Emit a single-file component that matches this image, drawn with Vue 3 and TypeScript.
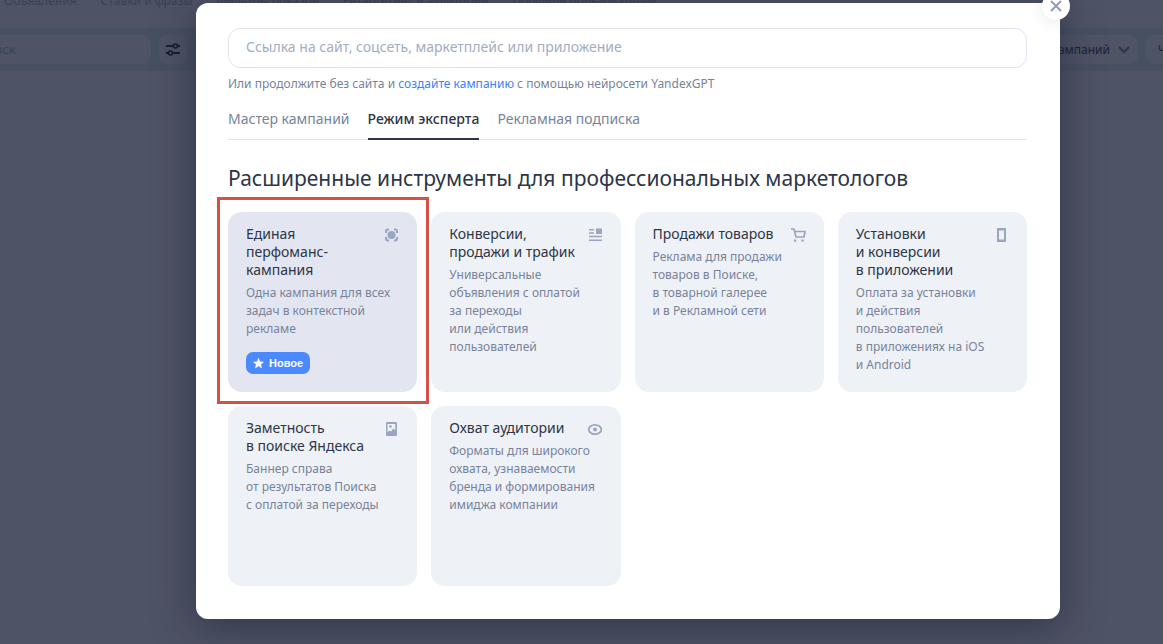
<script setup lang="ts">
import { ref } from 'vue'

interface Tool {
  icon: 'focus' | 'layout' | 'cart' | 'phone' | 'banner' | 'eye'
  title: string[]
  text: string[]
  isNew?: boolean
}

const sections = ['Объявления', 'Ставки и фразы', 'Фильтры показов', 'Ретаргетинг и аудитории', 'Профили пользователей']
const tabs = ['Мастер кампаний', 'Режим эксперта', 'Рекламная подписка']
const activeTab = ref(tabs[1])
const site = ref('')
const search = ref('')

const tools: Tool[] = [
  {
    icon: 'focus',
    title: ['Единая', 'перфоманс-', 'кампания'],
    text: ['Одна кампания для всех', 'задач в контекстной', 'рекламе'],
    isNew: true,
  },
  {
    icon: 'layout',
    title: ['Конверсии,', 'продажи и трафик'],
    text: ['Универсальные', 'объявления с оплатой', 'за переходы', 'или действия', 'пользователей'],
  },
  {
    icon: 'cart',
    title: ['Продажи товаров'],
    text: ['Реклама для продажи', 'товаров в Поиске,', 'в товарной галерее', 'и в Рекламной сети'],
  },
  {
    icon: 'phone',
    title: ['Установки', 'и конверсии', 'в приложении'],
    text: ['Оплата за установки', 'и действия', 'пользователей', 'в приложениях на iOS', 'и Android'],
  },
  {
    icon: 'banner',
    title: ['Заметность', 'в поиске Яндекса'],
    text: ['Баннер справа', 'от результатов Поиска', 'с оплатой за переходы'],
  },
  {
    icon: 'eye',
    title: ['Охват аудитории'],
    text: ['Форматы для широкого', 'охвата, узнаваемости', 'бренда и формирования', 'имиджа компании'],
  },
]
</script>

<template>
  <div class="screen">
    <div class="page">
      <nav class="sections">
        <a v-for="s in sections" :key="s" href="#">{{ s }}</a>
      </nav>
      <div class="toolbar">
        <div class="search-wrap">
          <input v-model="search" class="search" type="search" placeholder="Поиск" aria-label="Поиск" />
        </div>
        <button class="tool-btn" type="button" aria-label="Фильтры">
          <svg width="14" height="14" viewBox="0 0 14 14" fill="none" stroke="currentColor" stroke-width="2">
            <path d="M0 3h7M12 3h2M0 10h2M7 10h7" />
            <circle cx="9.5" cy="3" r="2" stroke-width="1.6" />
            <circle cx="4.5" cy="10" r="2" stroke-width="1.6" />
          </svg>
        </button>
        <span class="spacer"></span>
        <button class="drop" type="button">
          Статус кампаний
          <svg width="12" height="8" viewBox="0 0 12 8" fill="none" stroke="#2e3648" stroke-width="2">
            <path d="M1 1l5 5 5-5" />
          </svg>
        </button>
        <button class="drop cut" type="button">Ч</button>
      </div>
    </div>

    <div class="overlay">
      <section class="modal" role="dialog" aria-labelledby="dialog-title">
        <button class="close" type="button" aria-label="Закрыть">
          <svg width="12" height="12" viewBox="0 0 12 12" fill="none" stroke="#929db3" stroke-width="2">
            <path d="M1 1l10 10M11 1L1 11" />
          </svg>
        </button>

        <input
          v-model="site"
          class="url"
          type="text"
          placeholder="Ссылка на сайт, соцсеть, маркетплейс или приложение"
          aria-label="Ссылка на сайт, соцсеть, маркетплейс или приложение"
        />
        <p class="hint">
          Или продолжите без сайта и <a href="#">создайте кампанию</a> с помощью нейросети YandexGPT
        </p>

        <div class="tabs" role="tablist">
          <button
            v-for="t in tabs"
            :key="t"
            type="button"
            role="tab"
            :aria-selected="t === activeTab"
            :class="['tab', { active: t === activeTab }]"
            @click="activeTab = t"
          >{{ t }}</button>
        </div>

        <h1 id="dialog-title">Расширенные инструменты для профессиональных маркетологов</h1>

        <div class="grid">
          <div v-for="(tool, i) in tools" :key="tool.icon" class="cell">
            <button type="button" :class="['card', { selected: i === 0 }]">
              <span class="body">
                <span class="title"><span v-for="l in tool.title" :key="l" class="line">{{ l }}</span></span>
                <span class="text"><span v-for="l in tool.text" :key="l" class="line">{{ l }}</span></span>
                <span v-if="tool.isNew" class="badge">
                  <svg width="11" height="11" viewBox="0 0 11 11" fill="#fff">
                    <path d="M5.500 0.300 6.900 3.700 10.600 4 7.800 6.400 8.700 10 5.500 8.100 2.300 10 3.200 6.400 0.400 4 4.100 3.700Z" stroke="#fff" stroke-width=".4" stroke-linejoin="round" />
                  </svg>
                  <span class="badge-text">Новое</span>
                </span>
              </span>
              <svg class="icon" width="16" height="16" viewBox="0 0 16 16" fill="none" stroke="#9aa5bf" stroke-width="2">
                <template v-if="tool.icon === 'focus'">
                  <circle cx="8.500" cy="8" r="4" fill="#9aa5bf" stroke="none" />
                  <path d="M3 6V4.500Q3 2.500 5 2.500H6M11 2.500H12Q14 2.500 14 4.500V6M14 10V11.500Q14 13.500 12 13.500H11M6 13.500H5Q3 13.500 3 11.500V10" />
                </template>
                <template v-else-if="tool.icon === 'layout'">
                  <path d="M2 2.700h5M2 6h5M2 9.500h13M2 13.300h13" stroke-width="1.600" />
                  <path d="M9 1.500h6v5.500h-6z" fill="#9aa5bf" stroke="none" />
                </template>
                <template v-else-if="tool.icon === 'cart'">
                  <path d="M1 2h3l2 8h8l1-5.500H5" stroke-width="1.700" stroke-linejoin="round" />
                  <path d="M4 12.500h2.200v2.200H4zM11.500 12.500h2.200v2.200H11.500z" fill="#9aa5bf" stroke="none" />
                </template>
                <path v-else-if="tool.icon === 'phone'" d="M4 1h9v14H4zM6 3.500v9h5v-9z" fill="#9aa5bf" fill-rule="evenodd" stroke="none" />
                <template v-else-if="tool.icon === 'banner'">
                  <path d="M4 1h9q1 0 1 1v12q0 1-1 1H4q-1 0-1-1V2q0-1 1-1zM4.500 3v8.200l2-1.800 1.500 1 2.200-2.800 2 1.600V3z" fill="#9aa5bf" fill-rule="evenodd" stroke="none" />
                  <circle cx="7.500" cy="5.500" r="1.300" fill="#9aa5bf" stroke="none" />
                </template>
                <template v-else>
                  <ellipse cx="8" cy="8.500" rx="6.300" ry="4.700" stroke-width="1.800" />
                  <circle cx="8" cy="8.500" r="2" fill="#9aa5bf" stroke="none" />
                </template>
              </svg>
            </button>
            <span v-if="i === 0" class="frame"></span>
          </div>
        </div>
      </section>
    </div>
  </div>
</template>

<style>
body {
  margin: 0;
  background: #4e5365;
}
</style>

<style scoped>
.screen {
  position: relative;
  min-height: 100vh;
  overflow: hidden;
  background: #4e5365;
  color: #2d3547;
  font-family: "Noto Sans", "Open Sans", sans-serif;
}
.screen * {
  box-sizing: border-box;
}
button,
input {
  font-family: inherit;
}
button {
  border: 0;
  padding: 0;
  background: none;
}
.page {
  position: absolute;
  inset: 0;
}
.sections {
  display: flex;
  gap: 24px;
  height: 28px;
  margin-top: -9px;
  padding-left: 4px;
  white-space: nowrap;
}
.sections a {
  color: #3a4255;
  font-size: 12px;
  line-height: 20px;
  text-decoration: none;
}
.toolbar {
  display: flex;
  gap: 8px;
  height: 43px;
  margin-top: 9px;
  padding: 7px 0;
  background: #475062;
}
.search-wrap {
  display: flex;
  width: 151px;
  justify-content: flex-end;
  overflow: hidden;
  border-radius: 0 8px 8px 0;
}
.search {
  flex: none;
  width: 182px;
  height: 29px;
  border: 0;
  padding: 0 8px 1px;
  background: #4e5365;
  font-size: 13px;
}
.search::placeholder {
  color: #394456;
  opacity: 1;
}
.tool-btn {
  width: 28px;
  height: 29px;
  border-radius: 8px;
  background: #4e5365;
  color: #151d31;
}
.tool-btn svg {
  display: block;
  margin: 0 auto;
}
.spacer {
  flex: 1;
}
.drop {
  display: flex;
  gap: 8px;
  align-items: center;
  border-radius: 8px;
  padding: 0 8px;
  background: #4e5365;
  color: #1b2336;
  font-size: 12px;
}
.cut {
  width: 17px;
  border-radius: 8px 0 0 8px;
  padding: 0 0 0 12px;
}
.overlay {
  position: relative;
  display: flex;
  padding: 3px 103px 25px 196px;
}
.modal {
  position: relative;
  flex: 1;
  min-width: 0;
  border-radius: 12px;
  padding: 25px 33px 33px 32px;
  background: #fff;
  box-shadow: 0 8px 40px rgba(20, 28, 44, 0.5);
}
.close {
  position: absolute;
  top: -11px;
  right: -10px;
  display: flex;
  align-items: center;
  justify-content: center;
  width: 28px;
  height: 28px;
  border-radius: 50%;
  background: #fff;
  box-shadow: 0 2px 16px rgba(30, 40, 70, 0.1);
}
.url {
  display: block;
  width: 100%;
  height: 40px;
  border: 1px solid #e2e4ef;
  border-radius: 12px;
  padding: 0 17px 3px;
  background: #fff;
  color: #2d3547;
  font-size: 14px;
}
.url::placeholder {
  color: #a3adc1;
  opacity: 1;
}
.hint {
  margin: 6px 0 0;
  color: #78839b;
  font-size: 12px;
  line-height: 20px;
}
.hint a {
  color: #3b82fb;
  text-decoration: none;
}
.tabs {
  display: flex;
  gap: 18px;
  margin-top: 15px;
  border-bottom: 1px solid #e2e4ed;
}
.tab {
  height: 31px;
  margin-bottom: -1px;
  border-bottom: 2px solid transparent;
  padding-bottom: 9px;
  color: #78839b;
  font-size: 14px;
  line-height: 20px;
}
.tab.active {
  border-color: #2d3547;
  color: #2d3547;
  font-weight: 500;
}
h1 {
  margin: 24px 0 20px;
  font-size: 21px;
  font-weight: 400;
  line-height: 28px;
}
.grid {
  display: grid;
  grid-template-columns: repeat(4, minmax(0, 1fr));
  gap: 14px;
}
.cell {
  position: relative;
  display: flex;
}
.card {
  display: flex;
  flex: 1;
  align-items: flex-start;
  justify-content: space-between;
  min-width: 0;
  min-height: 180px;
  border-radius: 14px;
  padding: 13px 18px 17px;
  background: #eef1f6;
  text-align: left;
}
.card.selected {
  background: #e3e6f0;
}
.body {
  flex: 1;
  min-width: 0;
  white-space: nowrap;
}
.title,
.text,
.line {
  display: block;
}
.title {
  color: #2d3547;
  font-size: 14px;
  line-height: 18px;
}
.text {
  margin-top: 5px;
  color: #78839b;
  font-size: 12px;
  line-height: 18px;
}
.badge {
  display: inline-flex;
  gap: 5px;
  align-items: center;
  height: 22px;
  margin-top: 14px;
  border-radius: 7px;
  padding: 0 7px;
  background: #4a89ff;
  color: #fff;
  font-family: "Liberation Sans", sans-serif;
  font-size: 11px;
  font-weight: 700;
}
.badge-text {
  line-height: 22px;
}
.icon {
  flex: none;
  margin-top: 2px;
}
.frame {
  position: absolute;
  inset: -15px -12px -12px -11px;
  border: 3px solid #d35248;
  pointer-events: none;
}
</style>
